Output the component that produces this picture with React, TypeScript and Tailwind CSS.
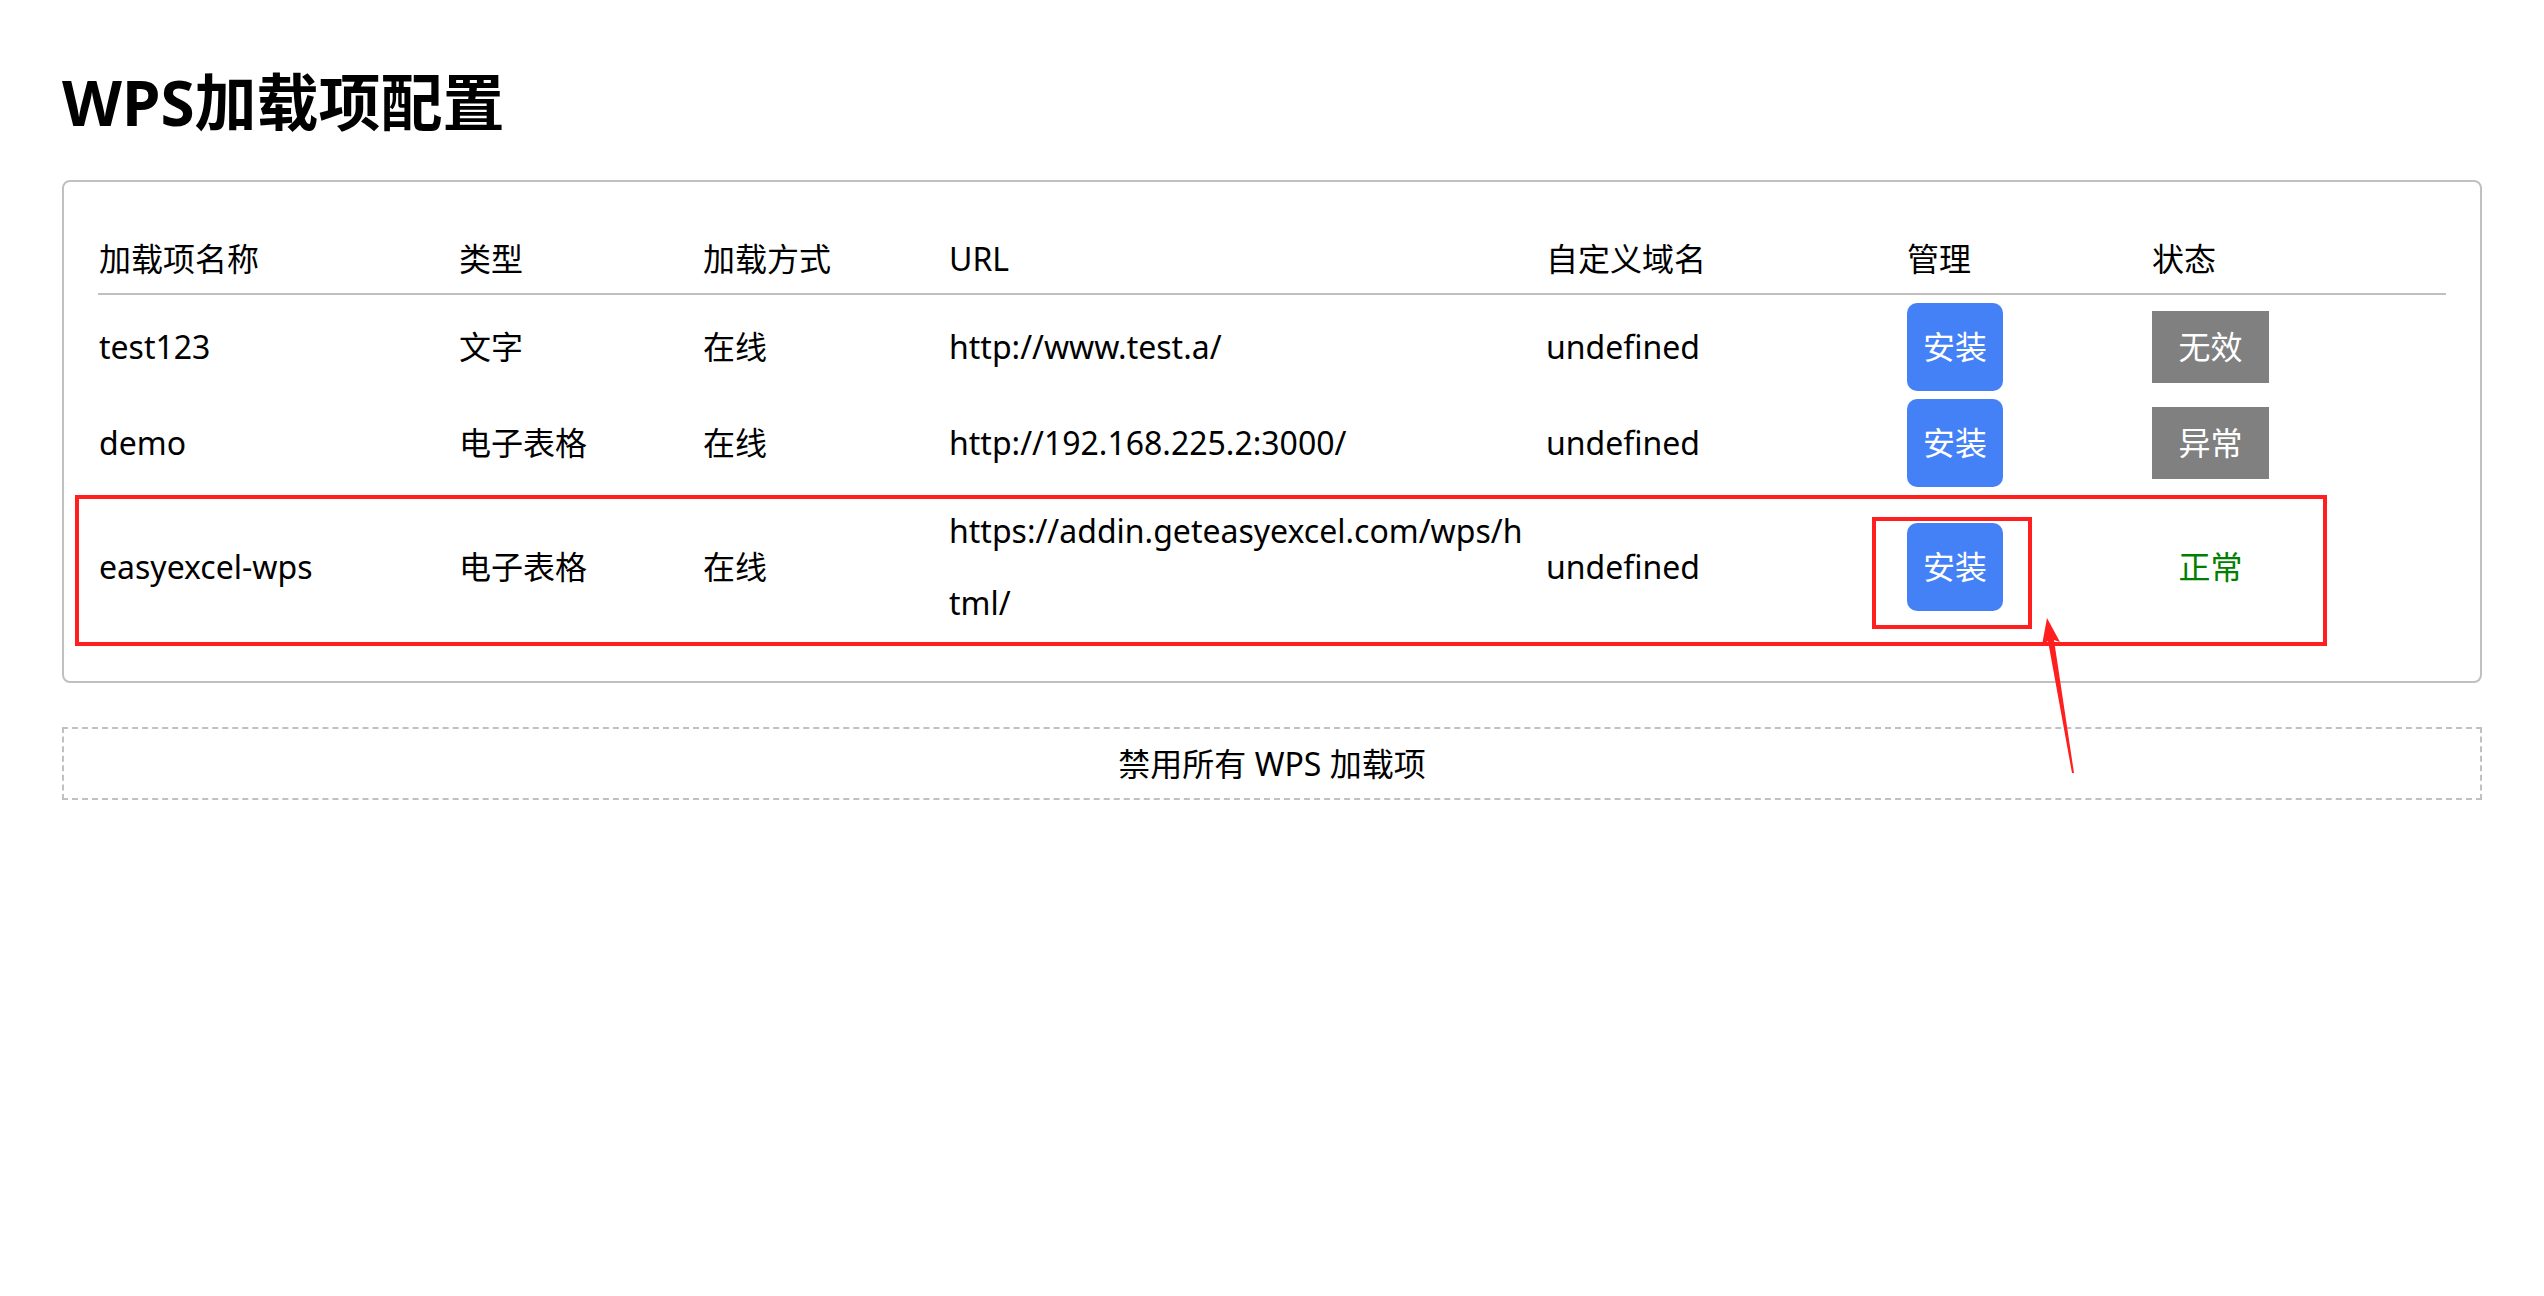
const rows = [
  { name: "test123", type: "文字", mode: "在线", url: ["http://www.test.a/"], domain: "undefined", status: "无效" },
  { name: "demo", type: "电子表格", mode: "在线", url: ["http://192.168.225.2:3000/"], domain: "undefined", status: "异常" },
  {
    name: "easyexcel-wps",
    type: "电子表格",
    mode: "在线",
    url: ["https://addin.geteasyexcel.com/wps/h", "tml/"],
    domain: "undefined",
    status: "正常",
  },
];

const headers = ["加载项名称", "类型", "加载方式", "URL", "自定义域名", "管理", "状态"];

function StatusBadge({ status }: { status: string }) {
  if (status === "正常") {
    return <div className="flex h-[72px] w-[117px] items-center justify-center text-[#008000]">{status}</div>;
  }
  return <div className="flex h-[72px] w-[117px] items-center justify-center bg-[#808080] text-white">{status}</div>;
}

function Annotations() {
  return (
    <div className="pointer-events-none absolute inset-0">
      <div className="absolute left-[75px] top-[495px] h-[151px] w-[2252px] border-4 border-[#ff1f1f]" />
      <div className="absolute left-[1872px] top-[517px] h-[112px] w-[160px] border-4 border-[#ff1f1f]" />
      <svg className="absolute left-0 top-0" width="2544" height="1296">
        <polygon
          points="2047,618 2060,642 2054,640 2074,773 2072,773 2048,641 2042,645"
          fill="#ff1f1f"
        />
      </svg>
    </div>
  );
}

export default function App() {
  return (
    <div
      className="relative min-h-[1296px] w-full bg-white px-[62px] pt-[62px] text-[32px] text-black"
      style={{ fontFamily: '"Noto Sans", "Noto Sans CJK SC", sans-serif' }}
    >
      <h1 className="text-[62px] font-bold leading-[80px]">WPS加载项配置</h1>

      <div className="mt-[38px] rounded-[8px] border-2 border-[#c0c0c0] px-[34px] pb-[42px] pt-[43px]">
        <table className="w-full table-fixed border-separate border-spacing-0">
          <colgroup>
            <col className="w-[360px]" />
            <col className="w-[244px]" />
            <col className="w-[246px]" />
            <col className="w-[597px]" />
            <col className="w-[361px]" />
            <col className="w-[245px]" />
            <col />
          </colgroup>
          <thead>
            <tr>
              {headers.map((h) => (
                <th key={h} className="border-b-2 border-[#c0c0c0] py-0 pl-[1px] text-left font-normal leading-[68px]">
                  {h}
                </th>
              ))}
            </tr>
          </thead>
          <tbody>
            {rows.map((r) => (
              <tr key={r.name}>
                <td className="pb-0 pl-[1px] pt-[8px] align-middle leading-[72px]">{r.name}</td>
                <td className="pb-0 pl-[1px] pt-[8px] align-middle leading-[72px]">{r.type}</td>
                <td className="pb-0 pl-[1px] pt-[8px] align-middle leading-[72px]">{r.mode}</td>
                <td className="pb-0 pl-[1px] pt-[8px] align-middle leading-[72px]">
                  {r.url.map((part) => (
                    <div key={part} className="whitespace-nowrap">
                      {part}
                    </div>
                  ))}
                </td>
                <td className="pb-0 pl-[1px] pt-[8px] align-middle leading-[72px]">{r.domain}</td>
                <td className="pb-0 pl-[1px] pt-[8px] align-middle">
                  <button className="flex h-[88px] w-[96px] items-center justify-center rounded-[10px] bg-[#4581f6] text-white">
                    安装
                  </button>
                </td>
                <td className="pb-0 pl-[1px] pt-[8px] align-middle leading-[72px]">
                  <StatusBadge status={r.status} />
                </td>
              </tr>
            ))}
          </tbody>
        </table>
      </div>

      <button className="mt-[44px] flex h-[73px] w-full items-center justify-center border-2 border-dashed border-[#c0c0c0]">
        禁用所有 WPS 加载项
      </button>

      <Annotations />
    </div>
  );
}
